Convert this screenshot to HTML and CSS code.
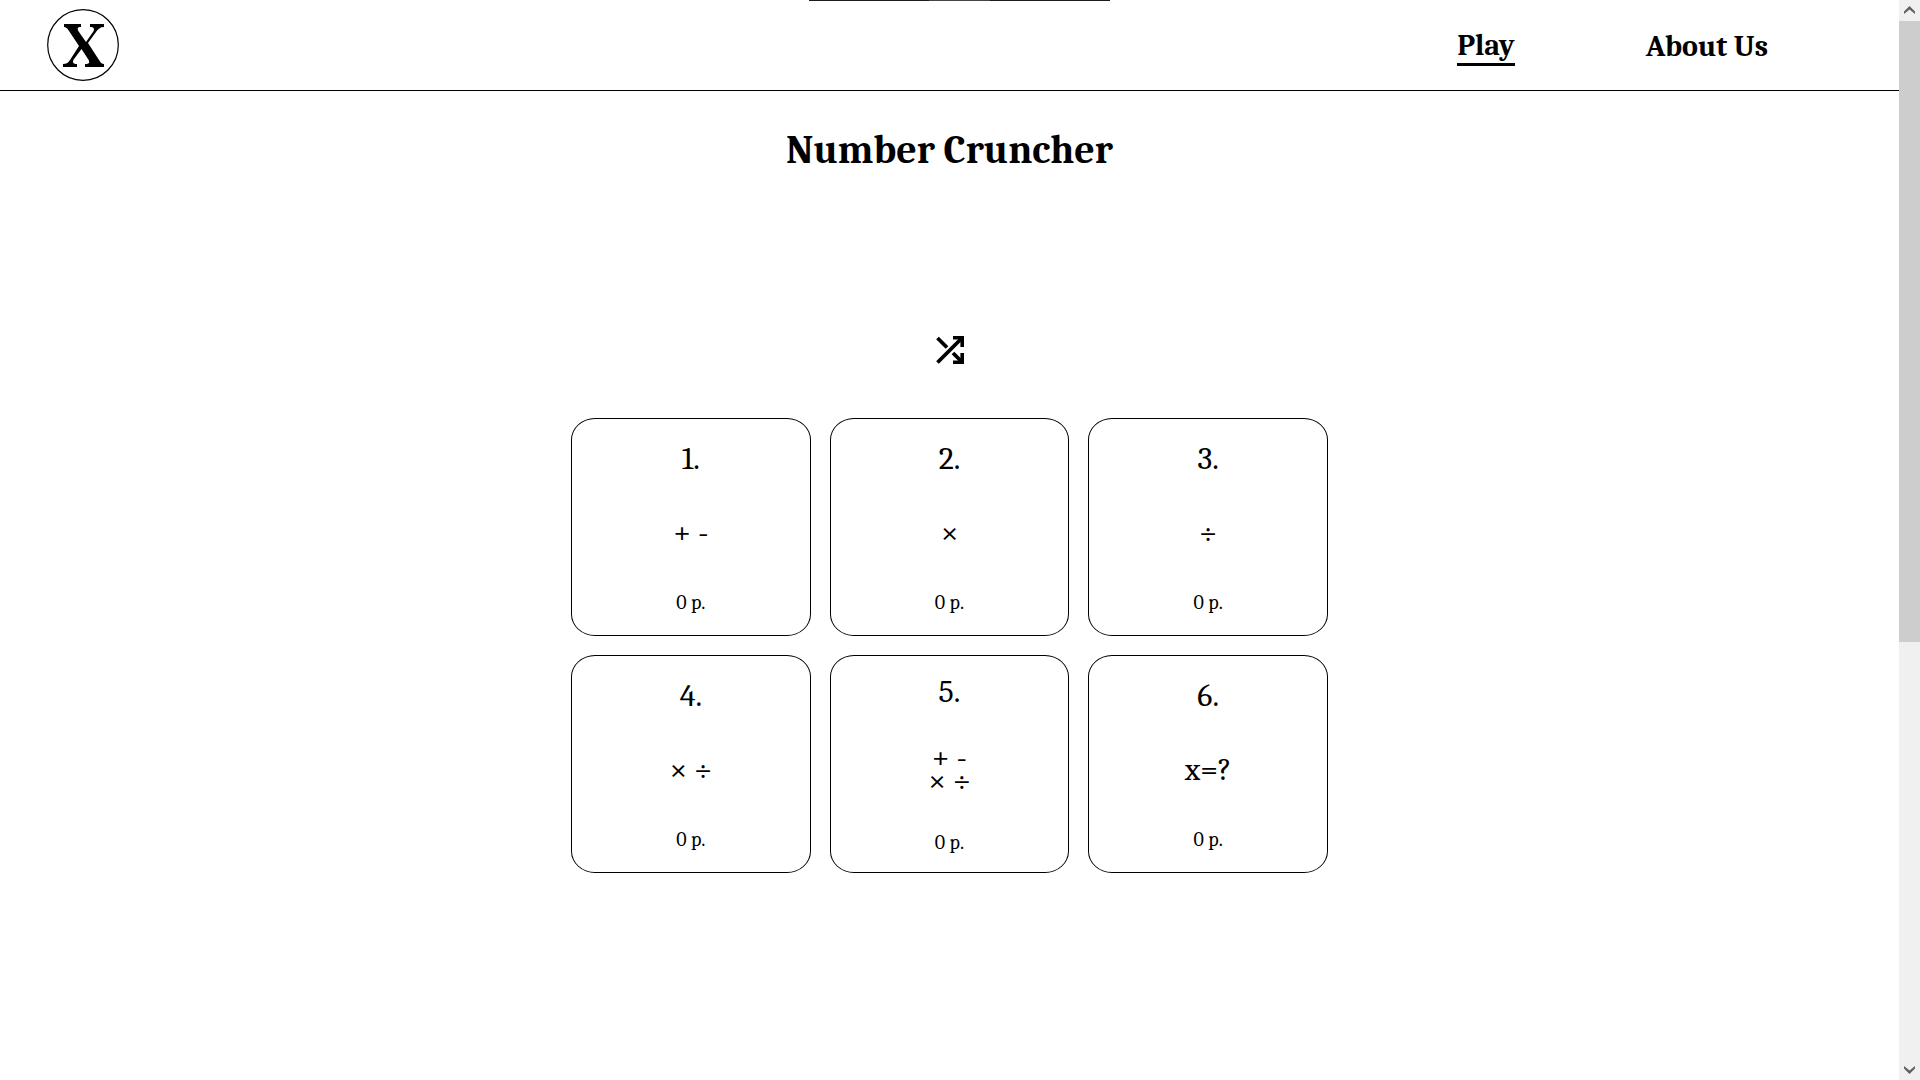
FILE: index.html
```html
<!DOCTYPE html>
<html lang="en">
<head>
<meta charset="utf-8">
<title>Number Cruncher</title>
<link rel="stylesheet" href="styles.css">
</head>
<body>
<div class="notch"></div>
<div class="page">
  <header class="header">
    <a class="logo" href="#" aria-label="Home">
      <svg viewBox="0 0 72 72" width="72" height="72" aria-hidden="true">
        <circle cx="36" cy="36" r="35.3" fill="none" stroke="#000" stroke-width="1.2"/>
        <path d="M17 15H34V18C30 18 30 20 32 23L39 33L46 23C48 20 47 18 43 18V15H57V18C53 18 51 20 49 23L41 34L52 51C54 54 55 55 57 55V58H38V55C43 55 43 53 41 50L34.5 40L27 50C25 53 26 55 30 55V58H16V55C19 55 21 54 23 51L32 37L22 22C20 19 19 18 17 18Z"/>
      </svg>
    </a>
    <nav class="nav">
      <a class="nav-link active" href="#">Play</a>
      <a class="nav-link" href="#">About Us</a>
    </nav>
  </header>
  <main class="main">
    <h1 class="title">Number Cruncher</h1>
    <button class="shuffle" type="button" aria-label="Shuffle">
      <svg viewBox="0 0 28 28" width="28" height="28" aria-hidden="true">
        <path d="M1.5 2L11 11.5M1.5 26.5L24 4M17 17L24 24" fill="none" stroke="#000" stroke-width="3.8"/>
        <path d="M17 0H28V11H24.4V6L22 3.6H17ZM24.4 17H28V28H17V24.4H22L24.4 22Z"/>
      </svg>
    </button>
    <div class="levels">
      <button class="card" type="button"><span class="number">1.</span><span class="symbols">+ -</span><span class="points">0 p.</span></button>
      <button class="card" type="button"><span class="number">2.</span><span class="symbols">×</span><span class="points">0 p.</span></button>
      <button class="card" type="button"><span class="number">3.</span><span class="symbols">÷</span><span class="points">0 p.</span></button>
      <button class="card" type="button"><span class="number">4.</span><span class="symbols">× ÷</span><span class="points">0 p.</span></button>
      <button class="card" type="button"><span class="number">5.</span><span class="symbols">+ -<br>× ÷</span><span class="points">0 p.</span></button>
      <button class="card" type="button"><span class="number">6.</span><span class="symbols">x=?</span><span class="points">0 p.</span></button>
    </div>
  </main>
</div>
<div class="scrollbar" aria-hidden="true">
  <svg class="arrow" viewBox="0 0 21 21"><path d="M5 11.5L10.5 6L16 11.5V14L10.5 9.5L5 14Z"/></svg>
  <div class="track"><div class="thumb"></div></div>
  <svg class="arrow" viewBox="0 0 21 21"><path d="M5 7V9.5L10.5 15L16 9.5V7L10.5 11.5Z"/></svg>
</div>
</body>
</html>
```

FILE: styles.css
```css
* {
  box-sizing: border-box;
}

body {
  margin: 0;
  display: flex;
  min-height: 100vh;
  background: #fff;
  color: #000;
  font-family: Cambria, Caladea, "Liberation Serif", serif;
}

.page {
  flex: 1;
}

.header {
  display: flex;
  align-items: center;
  justify-content: space-between;
  height: 91px;
  padding: 0 131px 0 47px;
  border-bottom: 1px solid #000;
}

.logo,
.logo svg,
.shuffle svg {
  display: block;
}

.nav {
  display: flex;
  align-items: center;
  gap: 131px;
}

.nav-link {
  padding-top: 4px;
  color: #000;
  font-size: 30px;
  font-weight: bold;
  line-height: 34px;
  text-decoration: none;
}

.nav-link.active {
  border-bottom: 3px solid #000;
}

.main {
  display: flex;
  flex-direction: column;
  align-items: center;
  padding: 35px 24px;
}

.title {
  margin: 0 0 162px;
  font-size: 40px;
  line-height: 48px;
}

.shuffle {
  margin: 0 0 54px;
  padding: 0;
  border: 0;
  background: none;
}

.levels {
  display: grid;
  grid-template-columns: repeat(3, 1fr);
  gap: 19px;
  width: 100%;
  max-width: 757px;
}

.card {
  display: flex;
  flex-direction: column;
  align-items: center;
  justify-content: space-around;
  min-height: 218px;
  padding: 0;
  border: 1px solid #000;
  border-radius: 10%;
  background: #fff;
  color: #000;
  font: inherit;
}

.number {
  font-size: 32px;
  line-height: 31px;
}

.symbols {
  padding-bottom: 3px;
  font-size: 32px;
  line-height: 23px;
}

.points {
  font-size: 20px;
  line-height: 18px;
}

.notch {
  position: absolute;
  top: 0;
  left: 50%;
  width: 301px;
  height: 1px;
  margin-left: -151px;
  background: linear-gradient(to right, #1c1c1c 40%, #444 40% 60%, #1c1c1c 60%);
}

.scrollbar {
  display: flex;
  flex-direction: column;
  width: 21px;
  background: #f0f0f0;
}

.arrow {
  width: 21px;
  height: 21px;
  fill: #606060;
}

.track {
  flex: 1;
}

.thumb {
  height: 59.8%;
  background: #cdcdcd;
}
```
